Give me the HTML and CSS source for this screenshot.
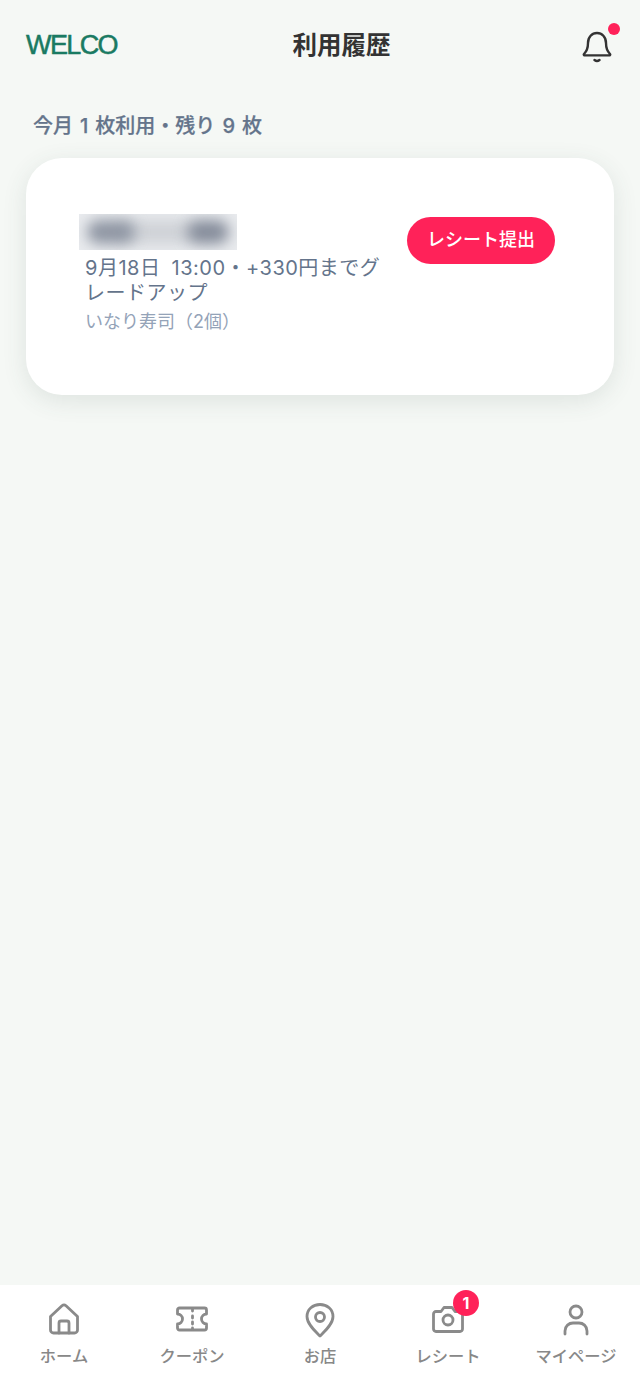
FILE: index.html
```html
<!DOCTYPE html>
<html lang="ja">
<head>
    <meta charset="UTF-8">
    <meta name="viewport" content="width=device-width, initial-scale=1.0">
    <title>利用履歴</title>
    <link rel="stylesheet" href="styles.css">
</head>
<body>
    <header class="header">
        <div class="logo">WELCO</div>
        <h1 class="title">利用履歴</h1>
        <div class="bell">
            <svg width="30" height="34" viewBox="0 0 30 34" fill="none" stroke="#333" stroke-width="2.4" stroke-linecap="round" stroke-linejoin="round">
                <path d="M2 25 c3-3 4-6 4-11 c0-6 4-10 9-10 s9 4 9 10 c0 5 1 8 4 11 c0.6 0.8 0 1.4-1 1.4 H3 c-1 0-1.600-0.600-1-1.400z"/>
                <path d="M12.500 31 c1.500 1.200 3.500 1.200 5 0"/>
            </svg>
            <span class="bell-dot"></span>
        </div>
    </header>

    <main class="main">
        <p class="summary">今月 1 枚利用・残り 9 枚</p>
        <section class="card">
            <div class="card-body">
                <div class="name-blur"><span class="blob blob-mid"></span><span class="blob blob-left"></span><span class="blob blob-right"></span></div>
                <p class="detail">9月18日 13:00・+330円までグレードアップ</p>
                <p class="item">いなり寿司（2個）</p>
            </div>
            <button class="submit-btn" type="button">レシート提出</button>
        </section>
    </main>

    <nav class="tabbar">
        <a class="tab">
            <svg class="tab-icon" viewBox="0 0 32 32">
                <path d="M2.500 13.500 L14 2.800 a3 3 0 0 1 4 0 L29.500 13.500 V27 a3 3 0 0 1-3 3 H5.500 a3 3 0 0 1-3-3z"/>
                <path d="M11 30 V20 a2 2 0 0 1 2-2 h6 a2 2 0 0 1 2 2 V30"/>
            </svg>
            <span>ホーム</span>
        </a>
        <a class="tab">
            <svg class="tab-icon" viewBox="0 0 32 32">
                <path d="M1.500 7 a2 2 0 0 1 2-2 H28.500 a2 2 0 0 1 2 2 v4 a5 5 0 0 0 0 10 v4 a2 2 0 0 1-2 2 H3.500 a2 2 0 0 1-2-2 v-4 a5 5 0 0 0 0-10z"/>
                <path d="M16.500 6 v2 M16.500 13 v2 M16.500 19 v2 M16.500 25 v1"/>
            </svg>
            <span>クーポン</span>
        </a>
        <a class="tab">
            <svg class="tab-icon" viewBox="0 0 32 32">
                <path d="M16 33 C11 28 3 21 3 13.500 C3 6 9 1.500 16 1.500 S29 6 29 13.500 C29 21 21 28 16 33z"/>
                <circle cx="16" cy="14" r="4.500"/>
            </svg>
            <span>お店</span>
        </a>
        <a class="tab">
            <span class="tab-icon-wrap">
                <svg class="tab-icon" viewBox="0 0 32 32">
                    <path d="M4 8.500 H9 L12 4.500 H20 L23 8.500 H28 a2.500 2.500 0 0 1 2.500 2.500 V26 a2.500 2.500 0 0 1-2.500 2.500 H4 a2.500 2.500 0 0 1-2.500-2.500 V11 a2.500 2.500 0 0 1 2.500-2.500z"/>
                    <circle cx="16" cy="17" r="5"/>
                </svg>
                <span class="tab-badge">1</span>
            </span>
            <span>レシート</span>
        </a>
        <a class="tab">
            <svg class="tab-icon" viewBox="0 0 32 32">
                <circle cx="16" cy="9" r="6"/>
                <path d="M5 31 V28 c0-5 4-8 8-8 h6 c4 0 8 3 8 8 v3"/>
            </svg>
            <span>マイページ</span>
        </a>
    </nav>
</body>
</html>
```

FILE: styles.css
```css
* {
    box-sizing: border-box;
}

body {
    margin: 0;
    min-height: 1385px;
    display: flex;
    flex-direction: column;
    background: #f5f8f5;
    font-family: Inter, "Noto Sans CJK JP", sans-serif;
}

p, h1 {
    margin: 0;
}

.header {
    display: flex;
    justify-content: space-between;
    align-items: center;
    height: 90px;
    padding: 0 26px;
}

.logo {
    width: 91px;
    color: #1a7a62;
    font-family: "Liberation Sans", sans-serif;
    font-size: 27px;
    letter-spacing: -1.6px;
    white-space: nowrap;
    -webkit-text-stroke: 0.5px #1a7a62;
}

.title {
    padding-bottom: 4px;
    color: #333;
    font-size: 24.5px;
    font-weight: 700;
}

.bell {
    position: relative;
    display: flex;
    justify-content: flex-end;
    width: 48px;
    margin-top: 2px;
}

.bell svg {
    margin-right: 2px;
}

.bell-dot {
    position: absolute;
    top: -6px;
    right: -6px;
    width: 12px;
    height: 12px;
    border-radius: 50%;
    background: #ff2259;
}

.main {
    flex: 1;
    padding: 21px 26px 0;
}

.summary {
    padding-left: 7px;
    color: #64748b;
    font-size: 20px;
    font-weight: 500;
    line-height: 30px;
    word-spacing: 1.7px;
    -webkit-text-stroke: 0.25px #64748b;
}

.card {
    display: flex;
    justify-content: space-between;
    align-items: flex-start;
    height: 237px;
    margin-top: 17px;
    padding: 56px 59px 0 53px;
    border-radius: 36px;
    background: #fff;
    box-shadow: 0 6px 24px rgba(60, 80, 70, 0.12);
}

.card-body {
    width: 310px;
}

.name-blur {
    position: relative;
    width: 158px;
    height: 36px;
    overflow: hidden;
    background: #e9ebee;
}

.blob {
    position: absolute;
    top: 6px;
    height: 24px;
    border-radius: 12px;
    filter: blur(7px);
}

.blob-mid {
    left: 40px;
    width: 80px;
    background: #cfd2d7;
}

.blob-left {
    left: 8px;
    width: 48px;
    background: #8f96a3;
}

.blob-right {
    left: 108px;
    width: 42px;
    background: #868d9b;
}

.detail {
    margin: 6px 0 0 6px;
    color: #64748b;
    font-size: 20px;
    line-height: 25px;
    letter-spacing: 0.5px;
    word-spacing: 5px;
}

.item {
    margin: 3px 0 0 6px;
    color: #94a3b8;
    font-size: 18px;
    line-height: 25px;
}

.submit-btn {
    width: 148px;
    height: 47px;
    margin-top: 3px;
    padding: 0 0 5px;
    border: none;
    border-radius: 24px;
    background: #ff2259;
    color: #fff;
    font-family: inherit;
    font-size: 18px;
    font-weight: 500;
}

.tabbar {
    display: flex;
    height: 100px;
    padding-top: 18px;
    background: #fff;
}

.tab {
    flex: 1;
    display: flex;
    flex-direction: column;
    align-items: center;
    gap: 9px;
    color: #888;
    font-size: 16.3px;
    font-weight: 500;
    line-height: 24px;
}

.tab-icon-wrap {
    position: relative;
    display: flex;
}

.tab-icon {
    display: block;
    width: 32px;
    height: 32px;
    overflow: visible;
    fill: none;
    stroke: #8a8a8a;
    stroke-width: 2.8;
    stroke-linecap: round;
    stroke-linejoin: round;
}

.tab-badge {
    position: absolute;
    top: -13px;
    right: -15px;
    width: 26px;
    height: 26px;
    border-radius: 50%;
    background: #ff2259;
    color: #fff;
    font-size: 16px;
    font-weight: 700;
    line-height: 26px;
    text-align: center;
}
```
